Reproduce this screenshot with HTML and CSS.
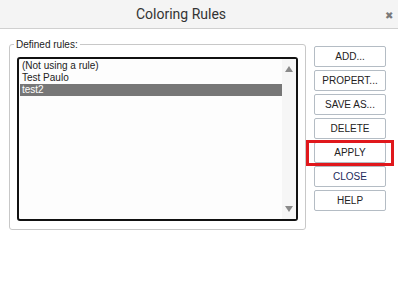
FILE: index.html
```html
<!DOCTYPE html>
<html>
<head>
<meta charset="utf-8">
<title>Coloring Rules</title>
<link rel="stylesheet" href="styles.css">
</head>
<body>
<div class="dialog">
<div class="titlebar">
<span class="title">Coloring Rules</span>
<span class="close">&#x2716;</span>
</div>
<div class="content">
<fieldset class="rules">
<legend>Defined rules:</legend>
<div class="listbox">
<ul class="items">
<li>(Not using a rule)</li>
<li>Test Paulo</li>
<li class="selected">test2</li>
</ul>
<div class="scrollbar">
<span class="arrow up"></span>
<span class="arrow down"></span>
</div>
</div>
</fieldset>
<div class="buttons">
<button>ADD...</button>
<button>PROPERT...</button>
<button>SAVE AS...</button>
<button>DELETE</button>
<div class="marked"><button>APPLY</button></div>
<button class="close-btn">CLOSE</button>
<button>HELP</button>
</div>
</div>
</div>
</body>
</html>
```

FILE: styles.css
```css
body {
  margin: 0;
  background: #fff;
  font-family: "Liberation Sans", Arial, sans-serif;
}
.titlebar {
  position: relative;
  height: 28px;
  padding-right: 36px;
  background: #f4f4f4;
  border-bottom: 1px solid #d0d0d0;
  display: flex;
  align-items: center;
  justify-content: center;
}
.title {
  font-family: Roboto, sans-serif;
  font-size: 14px;
  color: #333;
}
.close {
  position: absolute;
  right: 5px;
  top: 10px;
  font-size: 10px;
  color: #7a7a7a;
}
.content {
  display: flex;
  align-items: flex-start;
  gap: 8px;
  padding: 10px 0 0 9px;
}
.rules {
  margin: 0;
  width: 297px;
  min-width: 0;
  box-sizing: border-box;
  padding: 7px 7px 8px 7px;
  border: 1px solid #c8c8c8;
  border-radius: 3px;
}
.rules legend {
  margin-left: -3px;
  padding: 0 2px;
  font-size: 10px;
  color: #222;
}
.listbox {
  display: flex;
  height: 164px;
  box-sizing: border-box;
  border: 2px solid #111;
  border-radius: 3px;
  background: #fdfdfd;
}
.items {
  flex: 1;
  list-style: none;
  margin: 0;
  padding: 1px 0 0 1px;
  font-size: 10px;
  color: #222;
}
.items li {
  height: 12px;
  line-height: 12px;
  padding-left: 2px;
}
.items li.selected {
  background: #777;
  color: #fff;
}
.scrollbar {
  width: 14px;
  background: #f6f6f6;
  display: flex;
  flex-direction: column;
  justify-content: space-between;
  align-items: center;
  padding: 7px 0 7px;
}
.arrow {
  width: 0;
  height: 0;
  border-left: 4px solid transparent;
  border-right: 4px solid transparent;
}
.arrow.up { border-bottom: 6px solid #8a8a8a; }
.arrow.down { border-top: 6px solid #8a8a8a; }
.buttons {
  display: flex;
  flex-direction: column;
  gap: 3px;
  margin-top: 7px;
}
.buttons button {
  width: 72px;
  height: 21px;
  padding: 0;
  background: #fff;
  border: 1px solid #b4bcc4;
  border-radius: 2px;
  font-family: "Liberation Sans", Arial, sans-serif;
  font-size: 10px;
  color: #222;
}
.buttons .close-btn { color: #1c2a5a; }
.marked { position: relative; }
.marked::after {
  content: "";
  position: absolute;
  left: -8px;
  right: -8px;
  top: -2px;
  bottom: -3px;
  border: 3px solid #e0181c;
}
```
